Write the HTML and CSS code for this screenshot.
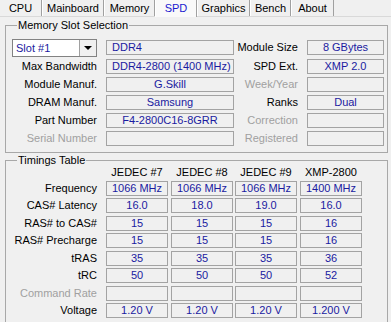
FILE: index.html
```html
<!DOCTYPE html>
<html lang="en">
<head>
  <meta charset="UTF-8">
  <title>CPU-Z SPD</title>
  <link rel="stylesheet" href="styles.css">
</head>
<body>
  <!-- タブ -->
  <div class="tabs">
    <div class="tab tab-cpu">CPU</div>
    <div class="tab tab-mainboard">Mainboard</div>
    <div class="tab tab-memory">Memory</div>
    <div class="tab tab-spd active">SPD</div>
    <div class="tab tab-graphics">Graphics</div>
    <div class="tab tab-bench">Bench</div>
    <div class="tab tab-about">About</div>
  </div>

  <!-- Memory Slot Selection -->
  <fieldset class="group slot-group">
    <legend>Memory Slot Selection</legend>
    <div class="slot-grid">
      <div class="combo">
        <span class="combo-text">Slot #1</span>
        <span class="combo-btn"><span class="arrow"></span></span>
      </div>
      <div class="field left first">DDR4</div>
      <div class="label first">Module Size</div>
      <div class="field first">8 GBytes</div>

      <div class="label">Max Bandwidth</div>
      <div class="field left">DDR4-2800 (1400 MHz)</div>
      <div class="label">SPD Ext.</div>
      <div class="field">XMP 2.0</div>

      <div class="label">Module Manuf.</div>
      <div class="field">G.Skill</div>
      <div class="label off">Week/Year</div>
      <div class="field"></div>

      <div class="label">DRAM Manuf.</div>
      <div class="field">Samsung</div>
      <div class="label">Ranks</div>
      <div class="field">Dual</div>

      <div class="label">Part Number</div>
      <div class="field">F4-2800C16-8GRR</div>
      <div class="label off">Correction</div>
      <div class="field"></div>

      <div class="label off">Serial Number</div>
      <div class="field"></div>
      <div class="label off">Registered</div>
      <div class="field"></div>
    </div>
  </fieldset>

  <!-- Timings Table -->
  <fieldset class="group timing-group">
    <legend>Timings Table</legend>
    <div class="timing-grid">
      <div></div>
      <div class="head">JEDEC #7</div>
      <div class="head">JEDEC #8</div>
      <div class="head">JEDEC #9</div>
      <div class="head">XMP-2800</div>

      <div class="label">Frequency</div>
      <div class="field">1066 MHz</div>
      <div class="field">1066 MHz</div>
      <div class="field">1066 MHz</div>
      <div class="field">1400 MHz</div>

      <div class="label">CAS# Latency</div>
      <div class="field">16.0</div>
      <div class="field">18.0</div>
      <div class="field">19.0</div>
      <div class="field">16.0</div>

      <div class="label">RAS# to CAS#</div>
      <div class="field">15</div>
      <div class="field">15</div>
      <div class="field">15</div>
      <div class="field">16</div>

      <div class="label">RAS# Precharge</div>
      <div class="field">15</div>
      <div class="field">15</div>
      <div class="field">15</div>
      <div class="field">16</div>

      <div class="label">tRAS</div>
      <div class="field">35</div>
      <div class="field">35</div>
      <div class="field">35</div>
      <div class="field">36</div>

      <div class="label">tRC</div>
      <div class="field">50</div>
      <div class="field">50</div>
      <div class="field">50</div>
      <div class="field">52</div>

      <div class="label off">Command Rate</div>
      <div class="field"></div>
      <div class="field"></div>
      <div class="field"></div>
      <div class="field"></div>

      <div class="label">Voltage</div>
      <div class="field">1.20 V</div>
      <div class="field">1.20 V</div>
      <div class="field">1.20 V</div>
      <div class="field">1.200 V</div>
    </div>
  </fieldset>
</body>
</html>
```

FILE: styles.css
```css
/* リセット */
* {
  margin: 0;
  padding: 0;
  box-sizing: border-box;
}
body {
  font-family: 'Liberation Sans', Arial, sans-serif;
  font-size: 11px;
  background-color: #f0f0f0;
  color: #000;
  width: 391px;
  height: 322px;
  overflow: hidden;
}

/* --- タブ --- */
.tabs {
  display: flex;
  height: 17px;
  border-bottom: 1px solid #d9d9d9;
}
.tab {
  height: 16px;
  line-height: 16px;
  text-align: center;
  border-right: 1px solid #a0a0a0;
  border-left: 1px solid #fff;
  background-color: #f0f0f0;
}
.tab.active {
  background-color: #f9f9f9;
  color: #1a1ad0;
  height: 17px;
}
.tab-cpu { width: 42px; border-left: none; }
.tab-mainboard { width: 62px; }
.tab-memory { width: 51px; }
.tab-spd { width: 42px; }
.tab-graphics { width: 53px; }
.tab-bench { width: 41px; }
.tab-about { width: 43px; }

/* --- グループボックス --- */
.group {
  margin: 2px 3px 0 5px;
  border: 1px solid #a8a8a8;
  padding: 7px 3px 6px 6px;
}
.group legend {
  margin-left: 5px;
  padding: 0 1px;
  line-height: 13px;
}
.timing-group {
  margin-top: 1px;
  padding-top: 0;
  height: 170px;
}

.label {
  text-align: right;
  padding-right: 9px;
  padding-top: 1px;
  line-height: 13px;
  white-space: nowrap;
}
.label.off {
  color: #a0a0a0;
}
.field {
  height: 15px;
  border: 1px solid #a3a3a3;
  line-height: 13px;
  text-align: center;
  color: #1a1aa0;
  white-space: nowrap;
  overflow: hidden;
}
.field.left {
  text-align: left;
  padding-left: 5px;
}
.field.first {
  margin-top: 1px;
}
.label.first {
  padding-top: 2px;
}

/* 上段 */
.slot-grid {
  display: grid;
  grid-template-columns: 94px 128px 73px 77px;
  grid-template-rows: 20px 18px 18px 18px 18px 15px;
}
.combo {
  width: 85px;
  height: 18px;
  border: 1px solid #828282;
  background-color: #fff;
  display: flex;
}
.combo-text {
  flex: 1;
  color: #1a1aa0;
  line-height: 16px;
  padding-left: 3px;
}
.combo-btn {
  width: 17px;
  height: 16px;
  background-color: #f0f0f0;
  border-left: 1px solid #a0a0a0;
  display: flex;
  align-items: center;
  justify-content: center;
}
.arrow {
  width: 0;
  height: 0;
  border-left: 4px solid transparent;
  border-right: 4px solid transparent;
  border-top: 4px solid #000;
}

/* 下段 */
.timing-grid {
  display: grid;
  grid-template-columns: 94px 65px 64px 65px 62px;
  grid-template-rows: 14px 17px 18px 17px 18px 17px 18px 17px 15px;
}
.timing-grid .field {
  width: 62px;
}
.head {
  width: 62px;
  text-align: center;
  line-height: 10px;
  white-space: nowrap;
}
```
